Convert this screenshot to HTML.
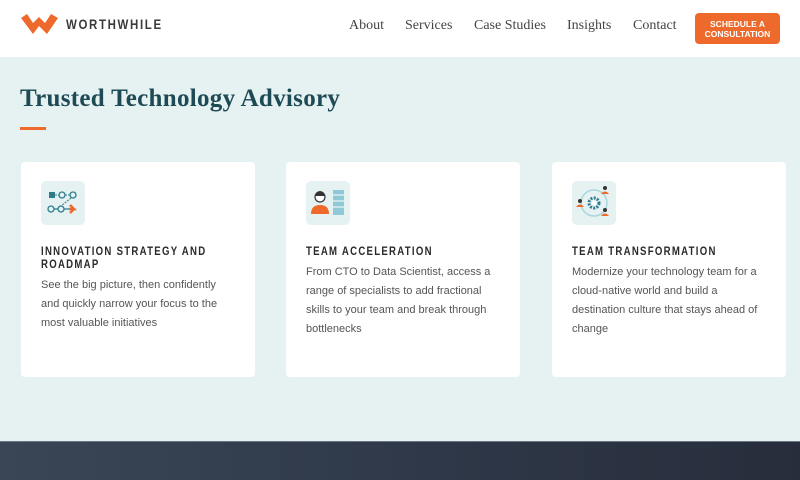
<!DOCTYPE html>
<html><head><meta charset="utf-8"><style>
*{margin:0;padding:0;box-sizing:border-box}
body{width:800px;height:480px;overflow:hidden;background:#e6f2f2;font-family:"Liberation Sans",sans-serif;position:relative}
.hdr{position:absolute;left:0;top:0;width:800px;height:57px;background:#fff}
.logo{position:absolute;left:21px;top:14px}
.brand{position:absolute;left:66px;top:16px;font:bold 14px "Liberation Sans",sans-serif;letter-spacing:2px;color:#3a3a3a;transform:scaleX(.82);transform-origin:left}
.nav{position:absolute;top:18px;font:14px "Liberation Serif",serif;color:#444}
.btn{position:absolute;left:695px;top:13px;width:85px;height:31px;background:#ee6a2c;border-radius:4px;color:#fff;font:bold 8.5px/10px "Liberation Sans",sans-serif;text-align:center;padding-top:6px}
h1{position:absolute;left:20px;top:85px;font:bold 25px "Liberation Serif",serif;color:#1d4a55;letter-spacing:.3px}
.bar{position:absolute;left:20px;top:127px;width:26px;height:3px;background:#ee6a2c}
.card{position:absolute;top:162px;width:234px;height:215px;background:#fff;border-radius:4px}
.ic{position:absolute;left:20px;top:19px;width:44px;height:44px;background:#e6f2f2;border-radius:5px}
.t{position:absolute;left:20px;top:83px;width:240px;font:bold 12px/13px "Liberation Sans",sans-serif;letter-spacing:1.6px;color:#2a2a2a;transform:scaleX(.8);transform-origin:left}
.d{position:absolute;left:20px;width:194px;font:11px/19px "Liberation Sans",sans-serif;color:#555}
.ft{position:absolute;left:0;top:441px;width:800px;height:39px;background:linear-gradient(90deg,#3a4656,#2f3949 50%,#272d3b);border-top:1px solid #6a7585}
</style></head><body>
<div class="hdr">
<svg class="logo" width="38" height="20" viewBox="0 0 38 20"><path d="M0 4 L6 0 L12 9 L18 3 L24 9 L30 0 L37 4 L26 20 L18 12 L12 20 Z" fill="#ee6a2c"/></svg>
<div class="brand">WORTHWHILE</div>
<div class="nav" style="left:349px">About</div>
<div class="nav" style="left:405px">Services</div>
<div class="nav" style="left:474px">Case Studies</div>
<div class="nav" style="left:567px">Insights</div>
<div class="nav" style="left:633px">Contact</div>
<div class="btn">SCHEDULE A<br>CONSULTATION</div>
</div>
<h1>Trusted Technology Advisory</h1>
<div class="bar"></div>
<div class="card" style="left:21px">
<div class="ic"><svg width="44" height="44"><rect x="8" y="11" width="6" height="6" fill="#2d7d8f"/><circle cx="21" cy="14" r="3" fill="none" stroke="#2d7d8f" stroke-width="1.3"/><circle cx="32" cy="14" r="3" fill="none" stroke="#2d7d8f" stroke-width="1.3"/><path d="M14 14h4M24 14h5M30 17l-10 8" stroke="#2d7d8f" stroke-width="1" stroke-dasharray="2 1" fill="none"/><circle cx="10" cy="28" r="3" fill="none" stroke="#2d7d8f" stroke-width="1.3"/><circle cx="20" cy="28" r="3" fill="none" stroke="#2d7d8f" stroke-width="1.3"/><path d="M13 28h4M23 28h6" stroke="#2d7d8f" stroke-width="1.3"/><path d="M28 28h5l-4-4M33 28l-4 4" stroke="#ee6a2c" stroke-width="2.5" fill="none"/></svg></div>
<div class="t">INNOVATION STRATEGY AND<br>ROADMAP</div>
<div class="d" style="top:114px">See the big picture, then confidently and quickly narrow your focus to the most valuable initiatives</div>
</div>
<div class="card" style="left:286px">
<div class="ic"><svg width="44" height="44"><circle cx="14" cy="16" r="5" fill="#fff" stroke="#333" stroke-width="1.2"/><path d="M9 15a5 5 0 0 1 10 0z" fill="#333"/><path d="M5 33q0-9 9-9q9 0 9 9z" fill="#ee6a2c"/><rect x="27" y="9" width="11" height="25" fill="#8fc8d6"/><path d="M27 14h11M27 20h11M27 26h11" stroke="#fff"/></svg></div>
<div class="t">TEAM ACCELERATION</div>
<div class="d" style="top:101px">From CTO to Data Scientist, access a range of specialists to add fractional skills to your team and break through bottlenecks</div>
</div>
<div class="card" style="left:552px">
<div class="ic"><svg width="44" height="44"><circle cx="22" cy="22" r="13" fill="none" stroke="#a9d6de" stroke-width="1.5"/><circle cx="22" cy="22" r="5" fill="none" stroke="#2d7d8f" stroke-width="3" stroke-dasharray="2 1.3"/><circle cx="22" cy="22" r="2" fill="#fff"/><circle cx="33" cy="7" r="2" fill="#333"/><path d="M29 13q4-5 8 0z" fill="#ee6a2c"/><circle cx="8" cy="20" r="2" fill="#333"/><path d="M4 26q4-5 8 0z" fill="#ee6a2c"/><circle cx="33" cy="29" r="2" fill="#333"/><path d="M29 35q4-5 8 0z" fill="#ee6a2c"/></svg></div>
<div class="t">TEAM TRANSFORMATION</div>
<div class="d" style="top:101px">Modernize your technology team for a cloud-native world and build a destination culture that stays ahead of change</div>
</div>
<div class="ft"></div>
</body></html>
